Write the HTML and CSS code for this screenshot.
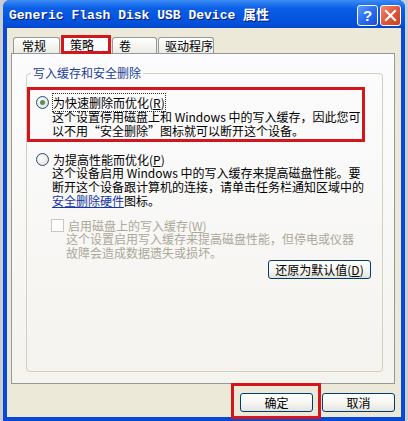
FILE: index.html
```html
<!DOCTYPE html>
<html lang="zh-CN">
<head>
<meta charset="UTF-8" />
<meta name="viewport" content="width=device-width, initial-scale=1.0" />
<title>Generic Flash Disk USB Device 属性</title>
<link rel="stylesheet" href="styles.css">
</head>
<body>
<div class="window">
  <div class="titlebar">
    <span class="title">Generic Flash Disk USB Device 属性</span>
    <div class="caption-btns">
      <span class="cap-btn help">?</span>
      <span class="cap-btn close">
        <svg width="13" height="13" viewBox="0 0 13 13"><path d="M2 2 L11 11 M11 2 L2 11" stroke="#fff" stroke-width="2.2" stroke-linecap="square"/></svg>
      </span>
    </div>
  </div>

  <div class="body">
    <!-- tab strip -->
    <div class="tabs">
      <div class="tab">常规</div>
      <div class="tab active">策略</div>
      <div class="tab">卷</div>
      <div class="tab">驱动程序</div>
    </div>

    <div class="panel">
      <fieldset class="group">
        <legend>写入缓存和安全删除</legend>

        <div class="option marked">
          <div class="opt-head">
            <span class="radio checked"></span>
            <span class="focus">为快速删除而优化(<u>R</u>)</span>
          </div>
          <p class="desc">这个设置停用磁盘上和 Windows 中的写入缓存，因此您可<br>以不用“安全删除”图标就可以断开这个设备。</p>
        </div>

        <div class="option">
          <div class="opt-head">
            <span class="radio"></span>
            <span>为提高性能而优化(<u>P</u>)</span>
          </div>
          <p class="desc">这个设备启用 Windows 中的写入缓存来提高磁盘性能。要<br>断开这个设备跟计算机的连接，请单击任务栏通知区域中的<br><a href="#" class="link">安全删除硬件</a>图标。</p>
        </div>

        <div class="option sub disabled">
          <div class="opt-head">
            <span class="checkbox"></span>
            <span>启用磁盘上的写入缓存(<u>W</u>)</span>
          </div>
          <p class="desc">这个设置启用写入缓存来提高磁盘性能，但停电或仪器<br>故障会造成数据遗失或损坏。</p>
        </div>

        <div class="restore-row">
          <button class="btn restore">还原为默认值(<u>D</u>)</button>
        </div>
      </fieldset>
    </div>

    <div class="actions">
      <button class="btn">确定</button>
      <button class="btn">取消</button>
    </div>
  </div>

  <!-- red annotation around OK -->
  <div class="mark-ok"></div>
</div>
</body>
</html>
```

FILE: styles.css
```css
body {
margin: 0;
background: #c9cdd6;
font-family: "Noto Sans CJK SC", "Liberation Sans", sans-serif;
font-size: 12px;
}

.window {
position: relative;
margin-left: 3px;
width: 402px;
height: 421px;
background: #0a48d6;
border-radius: 7px 7px 0 0;
display: flex;
flex-direction: column;
box-sizing: border-box;
padding: 0 4px 4px 4px;
}

/* Title bar */
.titlebar {
height: 28px;
margin: 0 -4px;
padding: 0 4px 0 6px;
display: flex;
align-items: center;
justify-content: space-between;
border-radius: 7px 7px 0 0;
background: linear-gradient(to bottom, #3d8cf5 0%, #2a7cf0 10%, #0b5fe6 30%, #0556e0 60%, #0450d8 85%, #0346c8 100%);
}

.title {
color: #fff;
font-family: "Liberation Mono", "Noto Sans CJK SC", monospace;
font-weight: bold;
font-size: 13px;
text-shadow: 1px 1px 0 #0a1a7a;
white-space: nowrap;
margin-top: -2px;
}

.caption-btns {
display: flex;
gap: 2px;
margin-top: 2px;
}

.cap-btn {
width: 19px;
height: 19px;
border: 1px solid #fff;
border-radius: 3px;
display: flex;
align-items: center;
justify-content: center;
color: #fff;
font-family: "Liberation Sans", sans-serif;
font-weight: bold;
font-size: 15px;
}

.help {
background: linear-gradient(135deg, #5d9bff 0%, #2a6ef0 50%, #1650d8 100%);
}

.close {
background: linear-gradient(135deg, #f08a6a 0%, #e0583a 50%, #c8401e 100%);
}

/* Body */
.body {
flex: 1;
background: #ece9d8;
padding: 7px 6px 0 4px;
display: flex;
flex-direction: column;
}

.tabs {
display: flex;
align-items: flex-end;
padding-left: 2px;
height: 18px;
}

.tab {
height: 15px;
padding: 0 0 0 8px;
border: 1px solid #919b9c;
border-bottom: none;
border-radius: 3px 3px 0 0;
background: linear-gradient(to bottom, #fff, #ecebe5);
line-height: 15px;
margin-right: 1px;
}

.tab:nth-child(1) { width: 37px; }
.tab:nth-child(3) { width: 37px; padding-left: 6px; }
.tab:nth-child(4) { width: 48px; padding-left: 6px; }

/* selected tab, with the red annotation frame */
.tab.active {
height: 13px;
width: 38px;
padding-left: 6px;
border: 3px solid #d4161c;
border-radius: 0;
background: #fcfcfe;
line-height: 13px;
margin: 0 1px -1px 0;
position: relative;
z-index: 1;
}

.panel {
height: 331px;
box-sizing: border-box;
border: 1px solid #919b9c;
background: linear-gradient(to bottom, #fcfcfe, #f4f3ee);
padding: 0 11px 11px 14px;
display: flex;
flex-direction: column;
}

.group {
flex: 1;
margin: 12px 0 0 0;
padding: 0 0 11px 0;
border: 1px solid #d0d0bf;
border-radius: 4px;
display: flex;
flex-direction: column;
min-width: 0;
}

.group legend {
color: #21409a;
padding: 0 2px;
margin-left: 4px;
line-height: 14px;
}

.option {
padding-left: 9px;
}

.option + .option {
margin-top: 10px;
}

.option.marked {
margin-top: 7px;
width: 326px;
border: 3px solid #d4161c;
padding: 5px 0 1px 6px;
}

.option.sub {
padding-left: 24px;
}

.opt-head {
display: flex;
align-items: center;
gap: 4px;
height: 14px;
}

.desc {
margin: 0 0 0 16px;
line-height: 14px;
white-space: nowrap;
}

.option.marked .desc {
margin-top: 1px;
}

.radio {
width: 11px;
height: 11px;
border: 1px solid #1c5180;
border-radius: 50%;
background: radial-gradient(circle at 40% 40%, #fff, #dcd9cc);
display: inline-flex;
align-items: center;
justify-content: center;
flex: none;
}

.radio.checked::after {
content: "";
width: 5px;
height: 5px;
border-radius: 50%;
background: #5a8e5a;
}

.checkbox {
width: 11px;
height: 11px;
border: 1px solid #cac8bb;
background: #fff;
flex: none;
}

.focus {
outline: 1px dotted #333;
outline-offset: 0;
}

.disabled {
color: #aca899;
}

.sub .desc {
margin-left: 15px;
}

.link {
color: #1634a5;
}

.restore-row {
margin-top: auto;
display: flex;
justify-content: flex-end;
padding-right: 11px;
}

/* Buttons */
.btn {
font-family: inherit;
font-size: 12px;
height: 19px;
padding: 0;
border: 1px solid #003c74;
border-radius: 3px;
background: linear-gradient(to bottom, #fff 0%, #f4f4f0 60%, #e3e2da 100%);
color: #000;
line-height: 15px;
}

.restore {
width: 103px;
}

.actions {
display: flex;
justify-content: flex-end;
gap: 9px;
margin-top: 9px;
padding-right: 0;
}

.actions .btn {
width: 73px;
}

.mark-ok {
position: absolute;
left: 228px;
top: 383px;
width: 84px;
height: 30px;
border: 3px solid #d4161c;
}
```
